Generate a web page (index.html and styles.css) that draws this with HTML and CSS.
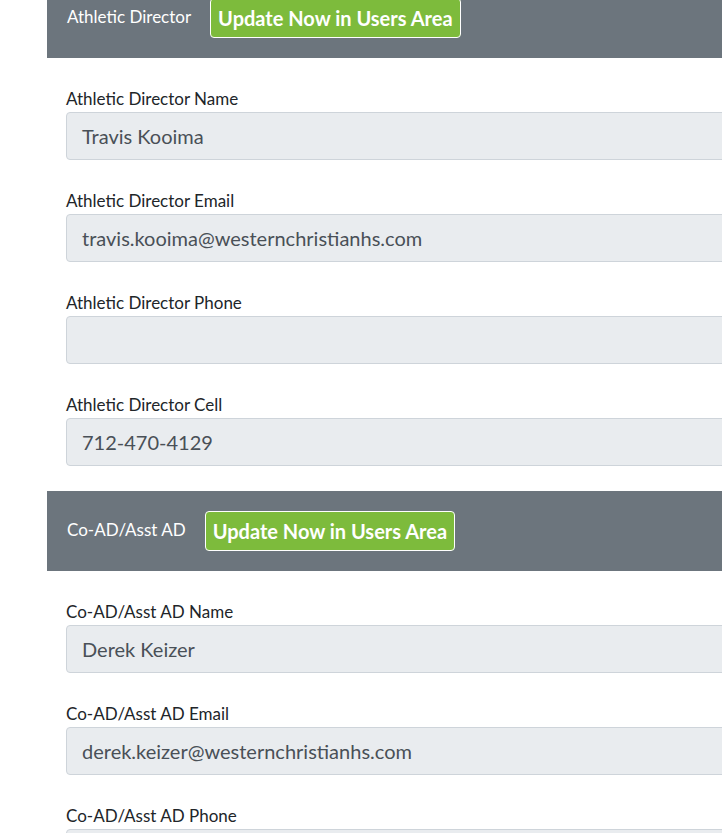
FILE: index.html
```html
<!DOCTYPE html>
<html>
<head>
<meta charset="utf-8">
<link rel="stylesheet" href="styles.css">
</head>
<body>
<div class="page">
  <div class="card">
    <div class="card-header first">
      <span class="card-title">Athletic Director</span>
      <a class="btn-update">Update Now in Users Area</a>
    </div>
    <div class="card-body">
      <div class="field">
        <label class="field-label">Athletic Director Name</label>
        <div class="field-input">Travis Kooima</div>
      </div>
      <div class="field">
        <label class="field-label">Athletic Director Email</label>
        <div class="field-input">travis.kooima@westernchristianhs.com</div>
      </div>
      <div class="field">
        <label class="field-label">Athletic Director Phone</label>
        <div class="field-input"></div>
      </div>
      <div class="field">
        <label class="field-label">Athletic Director Cell</label>
        <div class="field-input">712-470-4129</div>
      </div>
    </div>
  </div>
  <div class="card">
    <div class="card-header">
      <span class="card-title">Co-AD/Asst AD</span>
      <a class="btn-update">Update Now in Users Area</a>
    </div>
    <div class="card-body">
      <div class="field">
        <label class="field-label">Co-AD/Asst AD Name</label>
        <div class="field-input">Derek Keizer</div>
      </div>
      <div class="field">
        <label class="field-label">Co-AD/Asst AD Email</label>
        <div class="field-input">derek.keizer@westernchristianhs.com</div>
      </div>
      <div class="field">
        <label class="field-label">Co-AD/Asst AD Phone</label>
        <div class="field-input"></div>
      </div>
    </div>
  </div>
</div>
</body>
</html>
```
FILE: styles.css
```css
html, body {
  margin: 0;
  padding: 0;
  overflow: hidden;
  background: #fff;
}
body {
  font-family: "Lato", "Open Sans", sans-serif;
  color: #212529;
}
.page {
  margin-left: 47px;
  margin-top: -22px;
  width: 760px;
}
.card-header {
  height: 80px;
  background: #6c757d;
  display: flex;
  align-items: center;
  padding-left: 20px;
  box-sizing: border-box;
}
.card-title {
  color: #fff;
  font-size: 17px;
  margin-right: 19px;
  margin-top: -4px;
}
.btn-update {
  display: inline-flex;
  align-items: center;
  height: 40px;
  box-sizing: border-box;
  padding: 0 7px;
  background: #7dbb3c;
  border: 1px solid #fff;
  border-radius: 4px;
  color: #fff;
  font-weight: bold;
  font-size: 20px;
}
.card-body {
  padding: 31px 0 25px 19px;
  display: flex;
  flex-direction: column;
  gap: 31px;
}
.field {
  display: flex;
  flex-direction: column;
}
.field-label {
  font-size: 17px;
  line-height: 20px;
  margin-bottom: 3px;
}
.field-input {
  height: 48px;
  box-sizing: border-box;
  background: #e9ecef;
  border: 1px solid #ced4da;
  border-radius: 4px;
  padding: 0 15px;
  display: flex;
  align-items: center;
  font-size: 20px;
  color: #495057;
}
```
